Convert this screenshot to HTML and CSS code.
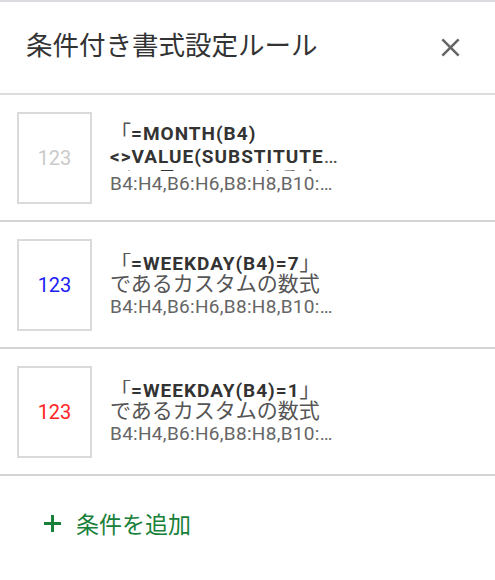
FILE: index.html
```html
<!DOCTYPE html>
<html lang="ja">
<head>
    <meta charset="UTF-8">
    <meta name="viewport" content="width=device-width, initial-scale=1.0">
    <title>条件付き書式設定ルール</title>
    <link rel="stylesheet" href="styles.css">
</head>
<body>
    <div class="panel">
        <header class="panel-header">
            <h1 class="panel-title">条件付き書式設定ルール</h1>
            <button class="close-button" aria-label="閉じる">
                <svg viewBox="0 0 24 24" width="31" height="31">
                    <path fill="currentColor" d="M19 6.41L17.59 5 12 10.59 6.41 5 5 6.41 10.59 12 5 17.59 6.41 19 12 13.41 17.59 19 19 17.59 13.41 12z"/>
                </svg>
            </button>
        </header>

        <ul class="rule-list">
            <li class="rule">
                <div class="rule-preview preview-gray">123</div>
                <div class="rule-info">
                    <div class="rule-condition is-clamped">「<b>=MONTH(B4)<wbr>&lt;&gt;VALUE(SUBSTITUTE(B$2,"月",""))</b>」<span class="rule-desc">であるカスタムの数式</span></div>
                    <div class="rule-range">B4:H4,B6:H6,B8:H8,B10:H10,B12:H12</div>
                </div>
            </li>
            <li class="rule">
                <div class="rule-preview preview-blue">123</div>
                <div class="rule-info">
                    <div class="rule-condition">「<b>=WEEKDAY(B4)=7</b>」<span class="rule-desc">であるカスタムの数式</span></div>
                    <div class="rule-range">B4:H4,B6:H6,B8:H8,B10:H10,B12:H12</div>
                </div>
            </li>
            <li class="rule">
                <div class="rule-preview preview-red">123</div>
                <div class="rule-info">
                    <div class="rule-condition">「<b>=WEEKDAY(B4)=1</b>」<span class="rule-desc">であるカスタムの数式</span></div>
                    <div class="rule-range">B4:H4,B6:H6,B8:H8,B10:H10,B12:H12</div>
                </div>
            </li>
        </ul>

        <button class="add-rule">
            <svg viewBox="0 0 19 19" width="19" height="19">
                <path d="M9.5 1v17M1 9.5h17" stroke="currentColor" stroke-width="3"/>
            </svg>
            <span>条件を追加</span>
        </button>
    </div>
</body>
</html>
```

FILE: styles.css
```css
body {
    margin: 0;
    background-color: white;
    font-family: Roboto, 'Noto Sans CJK JP', sans-serif;
    color: #333;
}
.panel {
    border-top: 2px solid #dcdce0;
}
.panel-header {
    display: flex;
    align-items: center;
    justify-content: space-between;
    height: 91px;
    padding: 0 29px 0 26px;
    border-bottom: 2px solid #dddde0;
}
.panel-title {
    margin: 0 0 8px;
    font-size: 26.5px;
    font-weight: 400;
    color: #333;
}
.close-button {
    display: flex;
    padding: 0;
    border: none;
    background: none;
    color: #666;
    cursor: pointer;
}
.rule-list {
    list-style: none;
    margin: 0;
    padding: 0;
}
.rule {
    display: flex;
    align-items: center;
    gap: 18px;
    padding: 17px 0 16px 17px;
    border-bottom: 2px solid #d4d4d4;
}
.rule-preview {
    display: flex;
    align-items: center;
    justify-content: center;
    flex: none;
    box-sizing: border-box;
    width: 75px;
    height: 92px;
    border: 2px solid #dadada;
    font-size: 20px;
}
.preview-gray {
    color: #cacaca;
}
.preview-blue {
    color: #1c1cf5;
}
.preview-red {
    color: #ff2424;
}
.rule-info {
    width: 228px;
}
.rule-condition {
    display: -webkit-box;
    -webkit-box-orient: vertical;
    -webkit-line-clamp: 2;
    overflow: hidden;
    overflow-wrap: anywhere;
    font-size: 21px;
    line-height: 20px;
    color: #555;
}
.rule-condition.is-clamped {
    line-height: 22px;
    padding-bottom: 3px;
}
.rule-condition b {
    font-size: 19px;
    font-weight: 700;
    letter-spacing: 1px;
    color: #333;
}
.rule-range {
    margin-top: 2px;
    overflow: hidden;
    white-space: nowrap;
    text-overflow: ellipsis;
    font-size: 19px;
    line-height: 22px;
    letter-spacing: 0.3px;
    color: #666;
}
.add-rule {
    display: flex;
    align-items: center;
    gap: 14px;
    margin-top: 30px;
    padding: 0 0 0 43px;
    border: none;
    background: none;
    font-family: inherit;
    font-size: 23px;
    color: #188038;
    cursor: pointer;
}
```
